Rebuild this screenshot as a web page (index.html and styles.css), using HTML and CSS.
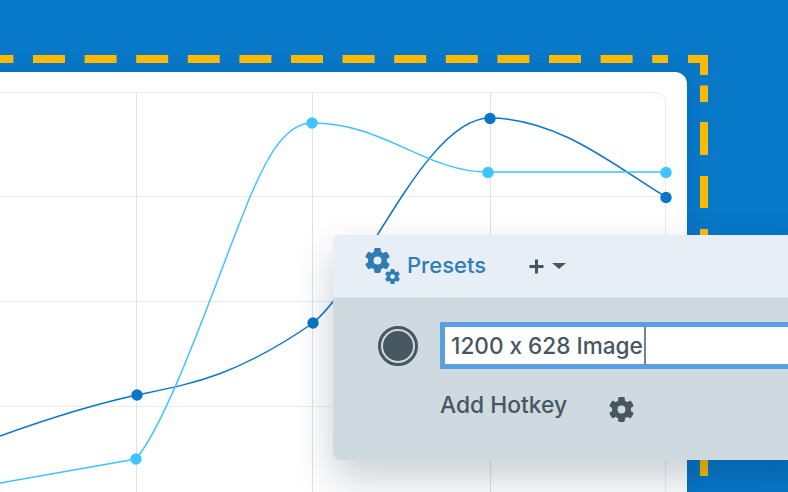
FILE: index.html
```html
<!DOCTYPE html>
<html lang="en">
<head>
<meta charset="utf-8">
<title>Presets</title>
<link rel="stylesheet" href="styles.css">
</head>
<body>
<svg class="defs" width="0" height="0" aria-hidden="true">
  <defs>
    <g id="cog">
      <circle cx="12" cy="12" r="6.5" fill="none" stroke="currentColor" stroke-width="5.4"/>
      <rect x="8.800" y="0" width="6.4" height="6" rx="1.4" fill="currentColor"/>
      <rect x="8.800" y="0" width="6.4" height="6" rx="1.4" fill="currentColor" transform="rotate(60 12 12)"/>
      <rect x="8.800" y="0" width="6.4" height="6" rx="1.4" fill="currentColor" transform="rotate(120 12 12)"/>
      <rect x="8.800" y="0" width="6.4" height="6" rx="1.4" fill="currentColor" transform="rotate(180 12 12)"/>
      <rect x="8.800" y="0" width="6.4" height="6" rx="1.4" fill="currentColor" transform="rotate(240 12 12)"/>
      <rect x="8.800" y="0" width="6.4" height="6" rx="1.4" fill="currentColor" transform="rotate(300 12 12)"/>
    </g>
  </defs>
</svg>
<main class="stage">
  <section class="card">
    <svg class="chart" width="687" height="420" viewBox="0 72 687 420">
      <g class="grid">
        <path class="grid-soft" d="M0 92.5H655Q665.5 92.5 665.5 103V492"/>
        <path class="grid-soft" d="M0 196.5H665M0 301.5H665M0 406.5H665"/>
        <path class="grid-firm" d="M136.5 92V492M312.5 92V492M490.5 92V492"/>
      </g>
      <path class="line dark" d="M0 436C50 418 100 403 137 395C190 384 235 377 313 323C365 280 425 118 490 118C560 118 620 170 666 197"/>
      <path class="line light" d="M0 483L136 459C171 417 220 269 250 197C263 167 282 123 312 123C385 123 425 172 488 172H666"/>
      <g class="dots-dark">
        <circle cx="137" cy="395" r="5.7"/>
        <circle cx="313" cy="323" r="5.7"/>
        <circle cx="490" cy="118.500" r="5.7"/>
        <circle cx="666" cy="197.500" r="5.7"/>
      </g>
      <g class="dots-light">
        <circle cx="136" cy="459" r="5.7"/>
        <circle cx="312" cy="123" r="5.7"/>
        <circle cx="488" cy="172.500" r="5.7"/>
        <circle cx="666" cy="172.500" r="5.7"/>
      </g>
    </svg>
  </section>

  <svg class="frame" width="788" height="492" viewBox="0 0 788 492" aria-hidden="true">
    <path class="frame-top" d="M-18.6 59H668"/>
    <path class="frame-side" d="M688 59H704V75M704 85.500V102M704 122V155M704 176V208M704 229V262M704 460V476"/>
  </svg>

  <section class="panel">
    <header class="panel-head">
      <span class="cogs">
        <svg class="cog-big" width="25" height="25" viewBox="0 0 24 24"><use href="#cog"/></svg>
        <svg class="cog-small" width="15" height="15" viewBox="0 0 24 24"><use href="#cog"/></svg>
      </span>
      <h2 class="panel-title">Presets</h2>
      <span class="add">
        <svg width="15" height="15" viewBox="0 0 15 15"><path d="M7.5 0.5V14.5M0.5 7.5H14.5" stroke="currentColor" stroke-width="3" fill="none"/></svg>
        <span class="caret"></span>
      </span>
    </header>
    <div class="panel-body">
      <div class="preset-row">
        <span class="radio"><span class="radio-dot"></span></span>
        <div class="field"><span class="field-text">1200 x 628 Image</span><span class="cursor"></span></div>
      </div>
      <div class="hotkey-row">
        <span class="hotkey">Add Hotkey</span>
        <svg class="cog-row" width="25" height="25" viewBox="0 0 24 24"><use href="#cog"/></svg>
      </div>
    </div>
  </section>
</main>
</body>
</html>
```

FILE: styles.css
```css
* { box-sizing: border-box; }
html, body { margin: 0; padding: 0; }
body {
  width: 788px;
  height: 492px;
  overflow: hidden;
  font-family: "Inter", "Liberation Sans", sans-serif;
  font-feature-settings: "calt" 0;
}
.defs { position: absolute; }
.stage {
  position: relative;
  width: 788px;
  height: 492px;
  padding-top: 72px;
  overflow: hidden;
  background: #0878c9;
}
.card {
  width: 687px;
  height: 420px;
  background: #fff;
  border-top-right-radius: 12px;
  box-shadow: 0 0 22px rgba(0, 50, 100, 0.14);
}
.chart { display: block; }
.grid path { fill: none; stroke-width: 1; }
.grid .grid-soft { stroke: #eaebec; }
.grid .grid-firm { stroke: #e1e2e3; }
.line { fill: none; stroke-width: 1.5; }
.dark { stroke: #0a76c8; }
.light { stroke: #40c4ff; }
.dots-dark { fill: #0a76c8; }
.dots-light { fill: #40c4ff; }
.frame { position: absolute; left: 0; top: 0; }
.frame-top {
  fill: none;
  stroke: #ffb900;
  stroke-width: 8;
  stroke-dasharray: 32 19.6;
}
.frame-side { fill: none; stroke: #ffb900; stroke-width: 8; }
.panel {
  position: absolute;
  left: 333px;
  top: 235px;
  width: 480px;
  height: 225px;
  border-radius: 8px;
  background: #cfd9e0;
  box-shadow: 0 18px 40px rgba(0, 30, 60, 0.22);
}
.panel-head {
  display: flex;
  align-items: flex-start;
  height: 63px;
  padding: 13px 0 0 32px;
  background: #e7eef5;
  border-bottom: 1px solid #d8e1e8;
  border-radius: 8px 8px 0 0;
  color: #2e7db5;
}
.cogs {
  display: block;
  position: relative;
  width: 42px;
  height: 36px;
  flex: none;
}
.cog-big { position: absolute; left: 0; top: 0; }
.cog-small { position: absolute; left: 20px; top: 21px; }
.panel-title {
  margin: 0;
  font-size: 22px;
  line-height: 34px;
  font-weight: 500;
  color: #2e7db5;
}
.add {
  display: flex;
  align-items: center;
  gap: 8px;
  height: 36px;
  margin-left: 43px;
  color: #475761;
}
.caret {
  width: 0;
  height: 0;
  border-left: 7px solid transparent;
  border-right: 7px solid transparent;
  border-top: 6px solid #475761;
}
.panel-body { padding: 24px 0 0 45px; color: #475761; }
.preset-row { display: flex; align-items: center; gap: 22px; }
.radio {
  display: flex;
  align-items: center;
  justify-content: center;
  flex: none;
  width: 40px;
  height: 40px;
  border: 3px solid #475761;
  border-radius: 50%;
}
.radio-dot { width: 30px; height: 30px; border-radius: 50%; background: #475761; }
.field {
  display: flex;
  align-items: center;
  width: 360px;
  height: 47px;
  padding-left: 6px;
  background: #fff;
  border: 5px solid #5a9fe0;
}
.field-text { font-size: 22.6px; line-height: 37px; font-weight: 500; color: #475761; white-space: nowrap; }
.cursor { width: 2px; height: 37px; margin-left: 1px; background: #7b8389; }
.hotkey-row { display: flex; align-items: center; padding: 18px 0 0 62px; }
.hotkey { font-size: 22.8px; line-height: 30px; font-weight: 500; color: #475761; }
.cog-row { margin: 10px 0 0 42px; color: #475761; }
```
